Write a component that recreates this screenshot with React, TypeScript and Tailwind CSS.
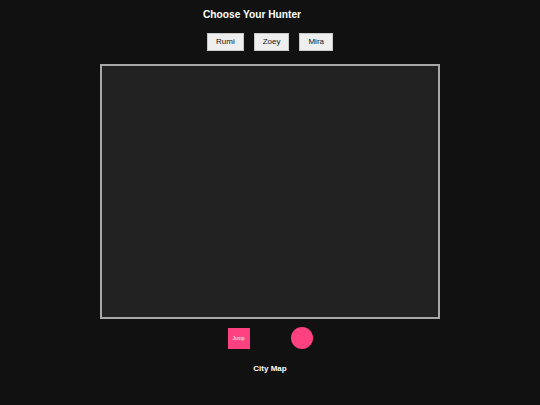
export default function App() {
  return (
    <div className="w-[540px] h-[405px] bg-[#111111] flex flex-col items-center font-['Liberation_Sans',Arial,sans-serif] text-white overflow-hidden">
      {/* Title (sits slightly left of centre in the original) */}
      <h1 className="mt-[8px] mr-[36px] text-[10.2px] leading-[13px] font-bold">Choose Your Hunter</h1>

      {/* Hunter picker */}
      <div className="mt-[12px] flex gap-[10px]">
        {['Rumi', 'Zoey', 'Mira'].map((name) => (
          <button
            key={name}
            className="h-[18px] px-[8px] bg-[#efefef] border border-[#c8c8c8] text-[#111] text-[8px] font-normal leading-none"
          >
            {name}
          </button>
        ))}
      </div>

      {/* Game canvas */}
      <div className="mt-[13px] w-[340px] h-[255px] bg-[#222222] border-2 border-[#a8a8a8]" />

      {/* Controls */}
      <div className="mt-[8px] flex items-center gap-[41px]">
        <button className="w-[22px] h-[21px] bg-[#ff4081] text-white text-[5px] leading-none">
          Jump
        </button>
        <div className="w-[22px] h-[22px] rounded-full bg-[#ff4081]" />
      </div>

      {/* Label */}
      <div className="mt-[15px] text-[8px] leading-[10px] font-bold">City Map</div>
    </div>
  )
}
